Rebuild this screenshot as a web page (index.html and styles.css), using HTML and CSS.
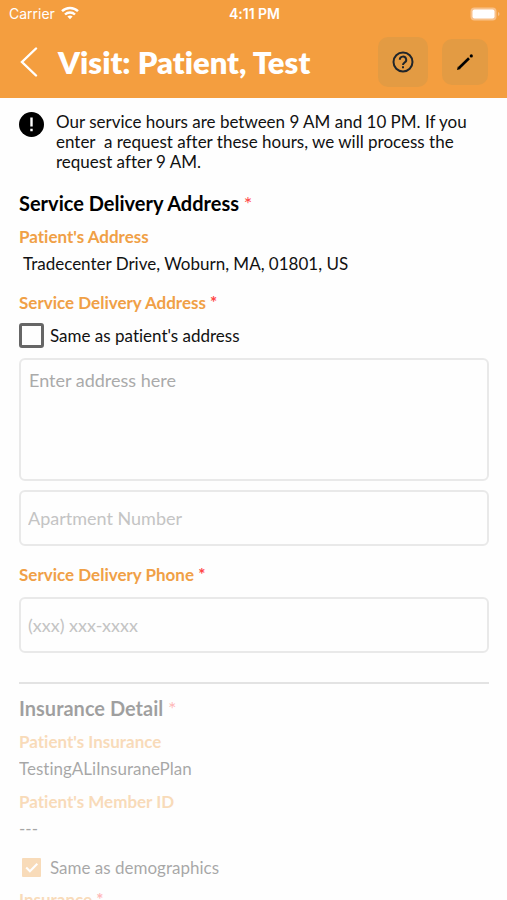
FILE: index.html
```html
<!DOCTYPE html>
<html lang="en">
<head>
<meta charset="utf-8">
<meta name="viewport" content="width=device-width, initial-scale=1">
<title>Visit: Patient, Test</title>
<link rel="stylesheet" href="styles.css">
</head>
<body>
<div class="screen">
  <header class="header">
    <div class="status">
      <span class="carrier">Carrier
        <svg width="18" height="14" viewBox="0 0 18 14" fill="none" stroke="#fff" stroke-width="2.4"><path d="M1 5.2a11.5 11.5 0 0 1 16 0M4 8.5a7.2 7.2 0 0 1 10 0"/><path d="M9 13.3l-2.6-2.8a4 4 0 0 1 5.2 0z" fill="#fff" stroke="none"/></svg>
      </span>
      <span class="clock">4:11 PM</span>
      <span class="battery">
        <svg width="30" height="14" viewBox="0 0 30 14"><rect x=".5" y=".5" width="26" height="13" rx="4" fill="#f8c18a"/><rect x="2.5" y="2.5" width="22" height="9" rx="2" fill="#fff"/><path d="M28 5v4q1.5-.6 1.5-2T28 5z" fill="#f8c18a"/></svg>
      </span>
    </div>
    <div class="toolbar">
      <button class="back" type="button" aria-label="Back">
        <svg width="18" height="30" viewBox="0 0 18 30" fill="none" stroke="#fff" stroke-width="2.4" stroke-linecap="round"><path d="M16 1.5L2 15l14 13.5"/></svg>
      </button>
      <h1 class="title">Visit: Patient, Test</h1>
      <button class="tool tool-help" type="button" aria-label="Help">
        <svg width="22" height="22" viewBox="0 0 22 22" fill="none" stroke="#20252a" stroke-width="2"><circle cx="11" cy="11" r="9.5"/><path d="M7.8 8.8a3.2 3.2 0 1 1 4.7 2.8Q11 12.500 11 14"/><path d="M11 15.200v2"/></svg>
      </button>
      <button class="tool tool-edit" type="button" aria-label="Edit">
        <svg width="18" height="18" viewBox="0 0 18 18"><path d="M3 15L13 5.300" stroke="#000" stroke-width="2.600"/><path d="M1 17l.9-3.600 2.700 2.700z"/><circle cx="15.300" cy="2.900" r="1.600"/></svg>
      </button>
    </div>
  </header>
  <main class="content">
    <div class="notice">
      <svg width="25" height="25" viewBox="0 0 25 25"><circle cx="12.5" cy="12.5" r="12.5"/><path d="M12.5 5.500v9M12.500 16.700v2.600" stroke="#fff" stroke-width="2.400"/></svg>
      <p class="notice-text">Our service hours are between 9 AM and 10 PM. If you enter&nbsp; a request after these hours, we will process the request after 9 AM.</p>
    </div>
    <section class="section">
      <h2 class="heading">Service Delivery Address <span class="required">*</span></h2>
      <h3 class="label">Patient's Address</h3>
      <p class="value value-address">Tradecenter Drive, Woburn, MA, 01801, US</p>
      <h3 class="label label-group">Service Delivery Address <span class="required">*</span></h3>
      <label class="check"><input class="box" type="checkbox">Same as patient's address</label>
      <textarea class="field field-area" aria-label="Service delivery address" placeholder="Enter address here"></textarea>
      <input class="field" type="text" aria-label="Apartment number" placeholder="Apartment Number">
      <label class="label label-phone" for="phone">Service Delivery Phone <span class="required">*</span></label>
      <input class="field field-phone" id="phone" type="tel" placeholder="(xxx) xxx-xxxx">
    </section>
    <hr class="divider">
    <section class="section section-disabled">
      <h2 class="heading">Insurance Detail <span class="required">*</span></h2>
      <h3 class="label">Patient's Insurance</h3>
      <p class="value">TestingALiInsuranePlan</p>
      <h3 class="label label-member">Patient's Member ID</h3>
      <p class="value">---</p>
      <label class="check check-demographics"><input class="box" type="checkbox" checked disabled>Same as demographics</label>
      <h3 class="label label-insurance">Insurance <span class="required">*</span></h3>
    </section>
  </main>
</div>
</body>
</html>
```
FILE: styles.css
```css
* {
  box-sizing: border-box;
}

body,
h1,
h2,
h3,
p {
  margin: 0;
}

body {
  background: #fefefe;
  color: #111;
  font-family: Lato, sans-serif;
  font-size: 17px;
  line-height: 20px;
  font-variant-ligatures: none;
}

button {
  border: 0;
  background: none;
  padding: 0;
}

svg {
  display: block;
}

.screen {
  display: flex;
  flex-direction: column;
  height: 100vh;
}

.header {
  flex: none;
  background: #f49e3f;
  color: #fff;
  padding-bottom: 10px;
}

.status {
  display: grid;
  grid-template-columns: 1fr auto 1fr;
  align-items: center;
  height: 28px;
  padding: 0 7px 0 9px;
  font-family: Inter, sans-serif;
  font-size: 14px;
}

.carrier {
  display: flex;
  gap: 6px;
}

.carrier svg {
  margin-top: 2px;
}

.clock {
  font-size: 14px;
  font-weight: 600;
}

.battery {
  justify-self: end;
}

.toolbar {
  display: flex;
  align-items: center;
  height: 60px;
  padding: 8px 19px 0 20px;
}

.title {
  flex: 1;
  margin-left: 20px;
  font-size: 31px;
  line-height: 40px;
  font-weight: 800;
}

.tool {
  display: grid;
  place-items: center;
  border-radius: 10px;
  background: #e39b43;
}

.tool-help {
  width: 50px;
  height: 50px;
}

.tool-edit {
  width: 46px;
  height: 46px;
  margin-left: 14px;
}

.content {
  flex: 1;
  min-height: 0;
  overflow-y: auto;
  scrollbar-width: none;
  padding: 14px 18px 0 19px;
}

.notice {
  display: flex;
  gap: 12px;
}

.notice svg {
  flex: none;
}

.notice-text {
  max-width: 420px;
}

.section {
  display: flex;
  flex-direction: column;
  align-items: flex-start;
}

.notice + .section {
  margin-top: 18px;
}

.heading {
  font-size: 20px;
  line-height: 26px;
  font-weight: 700;
  color: #000;
}

.label {
  margin-top: 11px;
  font-size: 17px;
  line-height: 20px;
  font-weight: 700;
  color: #f0a046;
}

.required {
  color: #f44;
}

.heading .required {
  font-weight: 400;
}

.value {
  margin-top: 7px;
}

.value-address {
  padding-left: 4px;
}

.label-group {
  margin-top: 19px;
}

.check {
  display: flex;
  align-items: center;
  gap: 6px;
  margin: 10px 0;
}

.box {
  appearance: none;
  flex: none;
  width: 25px;
  height: 25px;
  margin: 0;
  border: 3px solid #666;
  border-radius: 3px;
}

.box:checked {
  width: 19px;
  height: 19px;
  margin: 3px;
  border: 0;
  border-radius: 1px;
  background: #f0a046 url("data:image/svg+xml,%3Csvg xmlns='http://www.w3.org/2000/svg' viewBox='0 0 18 18' fill='none' stroke='white' stroke-width='2'%3E%3Cpath d='M4 9l3.500 3.500L14.500 5.500'/%3E%3C/svg%3E");
}

.field {
  width: 100%;
  height: 56px;
  padding: 0 7px;
  border: 2px solid #e9e9e9;
  border-radius: 6px;
  background: transparent;
  font: 18px/24px Lato, sans-serif;
  font-variant-ligatures: none;
  resize: none;
}

.field::placeholder {
  color: #c4c4c4;
  opacity: 1;
}

.field-area {
  height: 123px;
  margin-bottom: 9px;
  padding: 8px;
}

.field-area::placeholder {
  color: #aaa;
}

.label-phone {
  margin-top: 19px;
}

.field-phone {
  margin-top: 12px;
}

.divider {
  height: 2px;
  margin: 29px 0 11px;
  border: 0;
  background: #e3e3e3;
}

.section-disabled {
  opacity: 0.37;
}

.label-member {
  margin-top: 13px;
}

.check-demographics {
  margin: 16px 0 10px;
}

.label-insurance {
  margin-top: 0;
}
```
